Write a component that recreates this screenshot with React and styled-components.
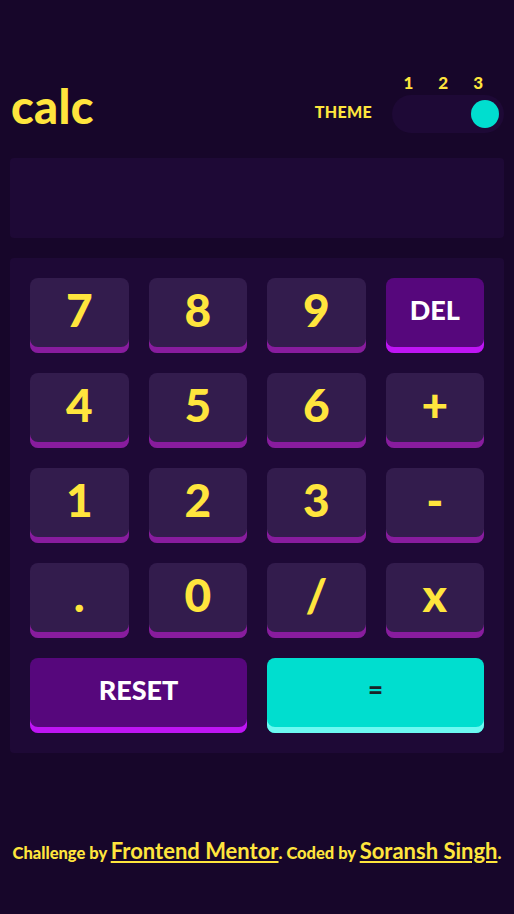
import React from "react";
import styled, { createGlobalStyle } from "styled-components";

const Global = createGlobalStyle`
  html, body {
    margin: 0;
    padding: 0;
    background: #17062a;
  }
  * {
    box-sizing: border-box;
  }
`;

const Pagina = styled.main`
  min-height: 914px;
  padding: 74px 10px 0;
  font-family: "Lato", "Liberation Sans", sans-serif;
  color: #ffe53d;
`;

const Encabezado = styled.header`
  display: flex;
  justify-content: space-between;
  align-items: flex-end;
`;

const Logo = styled.h1`
  margin: 0 0 4px 1px;
  font-size: 47px;
  font-weight: 900;
  line-height: 46px;
  letter-spacing: 0.3px;
`;

const Selector = styled.div`
  display: flex;
  align-items: flex-end;
  gap: 20px;
`;

const Etiqueta = styled.span`
  font-size: 16px;
  font-weight: 900;
  letter-spacing: 0.3px;
  margin-bottom: 12px;
`;

const ColumnaToggle = styled.div`
  display: flex;
  flex-direction: column;
  gap: 4px;
`;

const Numeros = styled.div`
  display: flex;
  justify-content: flex-end;
  gap: 25px;
  padding-right: 21px;
  font-size: 17px;
  font-weight: 900;
  line-height: 17px;
`;

const Toggle = styled.div`
  width: 112px;
  height: 38px;
  border-radius: 19px;
  background: #1e0936;
  display: flex;
  align-items: center;
  justify-content: flex-end;
  padding-right: 5px;
`;

const Bolita = styled.span`
  width: 28px;
  height: 28px;
  border-radius: 50%;
  background: #00decf;
`;

const Pantalla = styled.section`
  margin-top: 25px;
  height: 80px;
  border-radius: 4px;
  background: #1e0936;
`;

const Teclado = styled.section`
  margin-top: 20px;
  padding: 20px;
  border-radius: 4px;
  background: #1e0936;
  display: grid;
  grid-template-columns: repeat(4, 1fr);
  grid-auto-rows: 75px;
  gap: 20px;
`;

const variantes = {
  num: { bg: "#331c4d", sombra: "#881c9e", color: "#ffe53d", size: "46px" },
  accion: { bg: "#56077c", sombra: "#be15f4", color: "#ffffff", size: "27px" },
  igual: { bg: "#00decf", sombra: "#6cf9f1", color: "#1a2327", size: "26px" },
};

const Tecla = styled.button`
  grid-column: span ${({ ancho }) => ancho || 1};
  border: none;
  border-radius: 8px;
  padding: 0 0 13px;
  cursor: pointer;
  font-family: inherit;
  font-weight: 900;
  font-size: ${({ tipo }) => variantes[tipo].size};
  color: ${({ tipo }) => variantes[tipo].color};
  background: ${({ tipo }) => variantes[tipo].bg};
  box-shadow: inset 0 -6px 0 ${({ tipo }) => variantes[tipo].sombra};
  display: flex;
  align-items: center;
  justify-content: center;
`;

const Pie = styled.footer`
  margin-top: 84px;
  text-align: center;
  font-size: 16.5px;
  font-weight: 900;
  white-space: nowrap;
`;

const Enlace = styled.a`
  color: #ffe53d;
  font-size: 22px;
  font-weight: 700;
  text-decoration: underline;
`;

const teclas = [
  ["7", "num"], ["8", "num"], ["9", "num"], ["DEL", "accion"],
  ["4", "num"], ["5", "num"], ["6", "num"], ["+", "num"],
  ["1", "num"], ["2", "num"], ["3", "num"], ["-", "num"],
  [".", "num"], ["0", "num"], ["/", "num"], ["x", "num"],
];

const App = () => (
  <Pagina>
    <Global />
    <Encabezado>
      <Logo>calc</Logo>
      <Selector>
        <Etiqueta>THEME</Etiqueta>
        <ColumnaToggle>
          <Numeros>
            <span>1</span>
            <span>2</span>
            <span>3</span>
          </Numeros>
          <Toggle>
            <Bolita />
          </Toggle>
        </ColumnaToggle>
      </Selector>
    </Encabezado>
    <Pantalla />
    <Teclado>
      {teclas.map(([t, tipo]) => (
        <Tecla key={t} tipo={tipo}>
          {t}
        </Tecla>
      ))}
      <Tecla tipo="accion" ancho={2}>RESET</Tecla>
      <Tecla tipo="igual" ancho={2}>=</Tecla>
    </Teclado>
    <Pie>
      Challenge by <Enlace href="#">Frontend Mentor</Enlace>. Coded by{" "}
      <Enlace href="#">Soransh Singh</Enlace>.
    </Pie>
  </Pagina>
);

export default App;
